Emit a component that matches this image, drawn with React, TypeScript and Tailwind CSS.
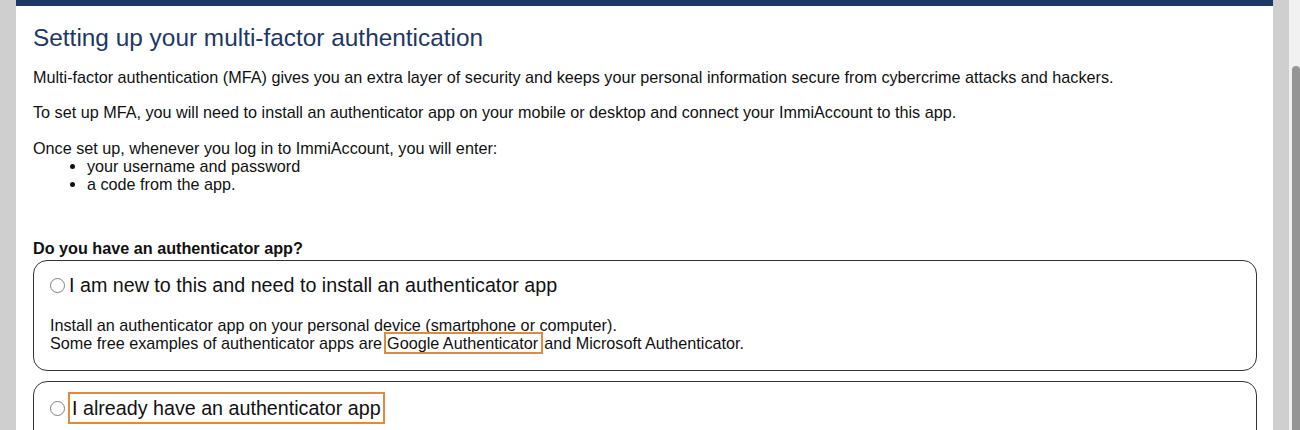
import React from 'react'

function Radio() {
  return <span className="inline-block h-[15px] w-[15px] shrink-0 rounded-full border border-[#808080] bg-white" />
}

export default function App() {
  return (
    <div className="flex h-[430px] overflow-hidden bg-[#cfcfcf] font-['Liberation_Sans',Arial,sans-serif] text-[#111]">
      <div className="w-4 shrink-0" />
      <main className="w-[1257px] shrink-0 border-t-[6px] border-[#1e3765] bg-white pl-[17px] pr-4">
        <h1 className="mt-[18px] text-[24.4px] leading-[28px] text-[#1e3765]">Setting up your multi-factor authentication</h1>
        <div className="mt-[16px] text-[16.2px] leading-[18px]">
          <p>Multi-factor authentication (MFA) gives you an extra layer of security and keeps your personal information secure from cybercrime attacks and hackers.</p>
          <p className="mt-[17px]">To set up MFA, you will need to install an authenticator app on your mobile or desktop and connect your ImmiAccount to this app.</p>
          <p className="mt-[18px]">Once set up, whenever you log in to ImmiAccount, you will enter:</p>
          <ul className="list-disc pl-[54px]">
            <li>your username and password</li>
            <li>a code from the app.</li>
          </ul>
        </div>
        <h2 className="mt-[46px] text-[16.2px] font-bold leading-[18px]">Do you have an authenticator app?</h2>
        <div className="mt-[3px] rounded-[14px] border-[1.5px] border-[#333] px-4 pb-[18px] pt-[13px]">
          <label className="flex items-center text-[19.7px] leading-[22px]">
            <Radio />
            <span className="ml-[4px]">I am new to this and need to install an authenticator app</span>
          </label>
          <p className="mt-[20px] text-[16.2px] leading-[18px]">
            Install an authenticator app on your personal device (smartphone or computer).
            <br />
            Some free examples of authenticator apps are
            <span className="ml-[2px] border-2 border-[#e08a3a] pl-[1px] pr-[3px]">Google Authenticator</span>
            <span className="ml-[1px]">and Microsoft Authenticator.</span>
          </p>
        </div>
        <div className="mt-[10px] rounded-[14px] border-[1.5px] border-[#333] px-4 pb-6 pt-[10px]">
          <label className="flex items-center text-[19.7px] leading-[22px]">
            <Radio />
            <span className="ml-[3px] border-2 border-[#e08a3a] px-[2px] py-[3px]">I already have an authenticator app</span>
          </label>
        </div>
      </main>
      <div className="w-4 shrink-0" />
      <div className="w-[3px] shrink-0 bg-[#f1f1f1]" />
      <div className="flex w-2 shrink-0 flex-col bg-[#f1f1f1]">
        <div className="mt-[66px] flex-1 rounded-t-[4px] bg-[#959595]" />
      </div>
    </div>
  )
}
